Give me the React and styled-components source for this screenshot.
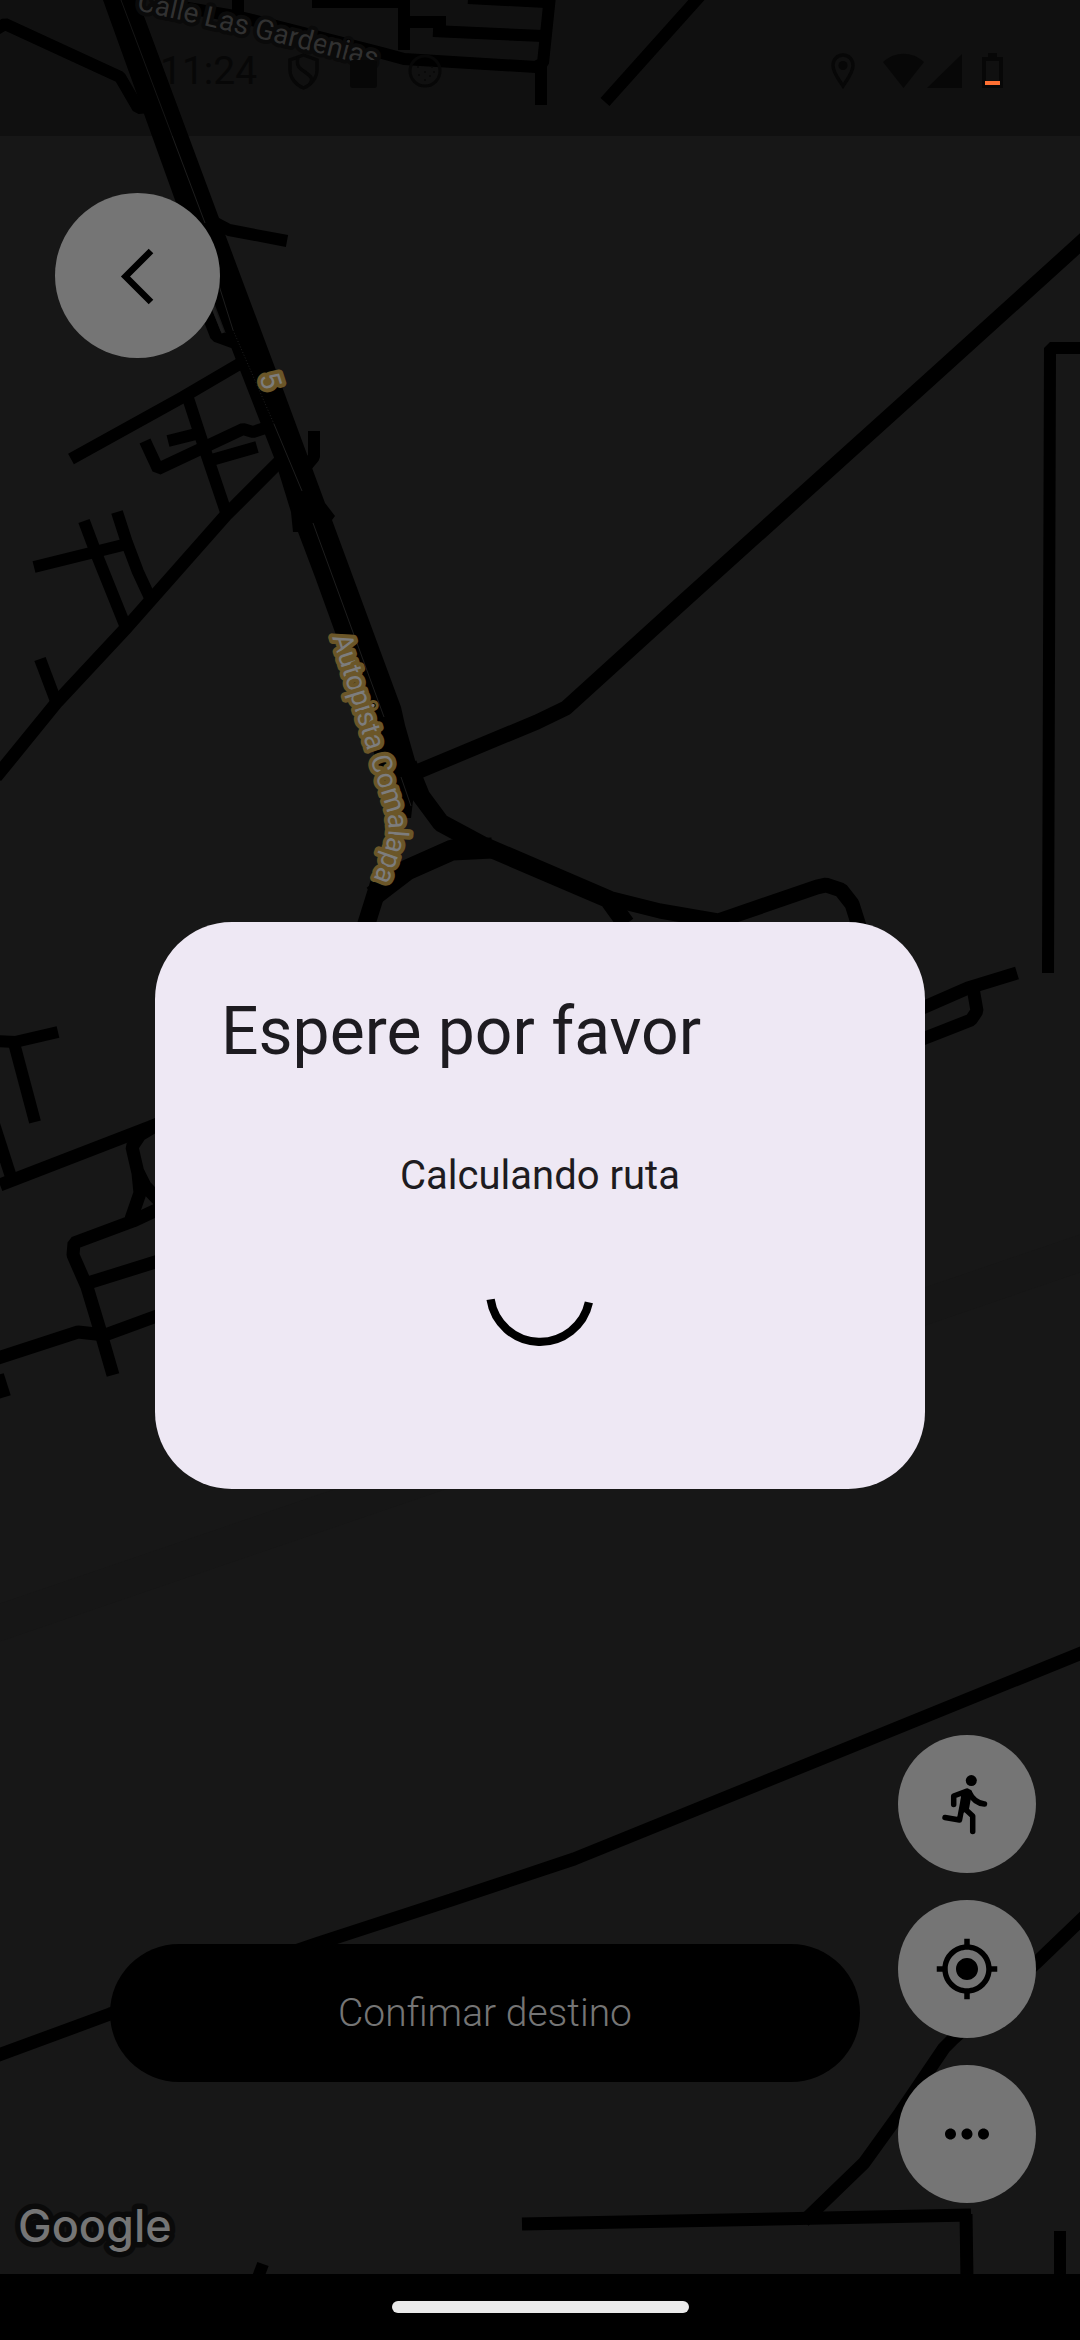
import React from "react";
import styled, { createGlobalStyle } from "styled-components";
import { MdMyLocation, MdMoreHoriz } from "react-icons/md";

const GlobalStyle = createGlobalStyle`
  *, *::before, *::after { box-sizing: border-box; }
  body { margin: 0; background: #171717; font-family: Roboto, "Noto Sans", sans-serif; }
  h2, p { margin: 0; font-weight: 400; }
`;

const Screen = styled.main`
  position: relative;
  min-height: 100vh;
  display: flex;
  flex-direction: column;
  overflow: hidden;
  background: #171717;
`;

const MapLayer = styled.svg`
  position: absolute;
  inset: 0;
  width: 100%;
  height: 100%;
`;

const StatusBar = styled.header`
  position: relative;
  display: flex;
  justify-content: space-between;
  align-items: center;
  height: 136px;
  padding: 6px 77px 0 160px;
  background: rgba(0, 0, 0, 0.27);
  color: #070707;
`;

const StatusGroup = styled.div`
  display: flex;
  align-items: center;
  gap: ${({ $gap }) => $gap}px;
`;

const Clock = styled.time`
  font-size: 39px;
  line-height: 44px;
`;

const Content = styled.section`
  position: relative;
  flex: 1;
  display: flex;
  flex-direction: column;
  justify-content: space-between;
  padding: 57px 44px 71px 55px;
`;

const RoundButton = styled.button`
  display: grid;
  place-items: center;
  width: ${({ $size }) => $size}px;
  height: ${({ $size }) => $size}px;
  padding: 0;
  border: 0;
  border-radius: 50%;
  background: #757575;
  color: #000;
`;

const BottomControls = styled.div`
  display: flex;
  align-items: center;
  gap: 38px;
  padding-left: 55px;
`;

const ConfirmButton = styled.button`
  flex: 1;
  height: 138px;
  margin-top: 88px;
  border: 0;
  border-radius: 69px;
  background: #000;
  color: #757575;
  font-family: inherit;
  font-size: 39px;
  font-weight: 300;
`;

const ActionColumn = styled.div`
  display: flex;
  flex-direction: column;
  gap: 27px;
`;

const NavigationBar = styled.footer`
  position: relative;
  display: grid;
  place-items: center;
  height: 66px;
  background: #000;
`;

const HomeHandle = styled.div`
  width: 297px;
  height: 12px;
  border-radius: 6px;
  background: #eaeaea;
`;

const Overlay = styled.div`
  position: absolute;
  inset: 0;
  display: grid;
  place-items: center;
  padding: 136px 155px 66px;
`;

const Dialog = styled.section`
  width: 100%;
  padding: 66px 66px 142px;
  border-radius: 77px;
  background: #eee8f4;
  color: #1d1b20;
  display: flex;
  flex-direction: column;
`;

const DialogTitle = styled.h2`
  font-size: 66px;
  line-height: 88px;
`;

const DialogBody = styled.div`
  display: flex;
  flex-direction: column;
  align-items: center;
  gap: 33px;
  padding-top: 72px;
`;

const DialogText = styled.p`
  font-size: 40px;
  line-height: 56px;
`;

const minorRoads = [
  "M-5 30L5 24L120 77L138 108L150 107",
  "M212 221L229 230L287 241",
  "M205 308L216 336L238 344",
  "M238 -5V20",
  "M176 6L240 17L382 53L404 59L536 67L543 63L550 -4",
  "M541 64V105",
  "M468 -2L546 2",
  "M312 2H409",
  "M404 0V50",
  "M398 22H446",
  "M433 31L543 36",
  "M700 -4L605 102",
  "M1080 348H1050L1048 973",
  "M71 459L183 397L241 363",
  "M188 398L205 450L226 512",
  "M145 441L158 469L243 429L253 432L265 428",
  "M168 441L200 433",
  "M208 461L257 447",
  "M84 521L96 553L127 630",
  "M117 512L127 543L138 572L151 600",
  "M34 567L127 544",
  "M40 659L57 704",
  "M314 431V457L304 469",
  "M-3 1041L15 1042L58 1032",
  "M14 1043L35 1122",
  "M-6 1124L12 1180",
  "M-2 1375L5 1397",
  "M263 2264L257 2280",
  "M1060 2231V2280",
];

const streets = [
  "M280 461L226 515L127 627L57 702L-4 777",
  "M0 1185L150 1127L170 1119",
  "M165 1120L140 1135L132 1147L138 1173L140 1193L131 1219",
  "M138 1172L145 1186L164 1206",
  "M165 1206L133 1221L74 1243L73 1255L87 1287L100 1330L113 1375",
  "M88 1283L165 1259",
  "M-2 1358L78 1332L105 1335L165 1313",
  "M920 1009L968 988L1017 973",
  "M973 988L977 1011L971 1020L920 1040",
  "M1086 1915L1036 1963L953 2039L944 2048L900 2113L864 2163L804 2221",
  "M522 2224L971 2215",
  "M966 2214L967 2280",
  "M1084 1652L860 1743L574 1859L451 1900L319 1943L110 2014L-4 2056",
];

const Roads = ({ paths, width }) => (
  <g fill="none" stroke="#000" strokeWidth={width} strokeLinejoin="bevel">
    {paths.map((d) => (
      <path key={d} d={d} />
    ))}
  </g>
);

function StreetMap() {
  return (
    <MapLayer viewBox="0 0 1080 2340" preserveAspectRatio="xMidYMid slice" aria-label="Mapa">
      <path d="M-10 1626L1090 1250" stroke="#161616" strokeWidth="36" />
      <Roads paths={minorRoads} width={12} />
      <Roads paths={streets} width={13} />
      <Roads
        width={15}
        paths={[
          "M412 774L537 722L566 708L685 600L929 380L1086 238",
          "M600 896L660 911L718 921L817 887L826 885L841 890L852 904L859 926",
        ]}
      />
      <Roads
        width={18}
        paths={[
          "M408 764L421 796L441 823L482 845L608 899L626 924",
          "M380 880L377 890L366 925",
        ]}
      />
      <Roads width={21} paths={["M492 848L452 850L407 870L373 896"]} />
      <path d="M103 0L175 200L236 360L275 460L291 512L293 532L298 532L315 577L336 635L355 700L380 770L400 818L411 818L417 767L405 725L401 707L332 520L335 516L325 503L277 373L219 218L138 0Z" />
      <g fill="none" stroke="#1d1d1d" strokeWidth="1">
        <path d="M121 0L205 223M216 276L233 330" />
        <path d="M233 330L274 424" strokeDasharray="1 2" />
        <path d="M274 424L302 491M313 523L384 717M401 777L411 806" />
        <path d="M213 308L223 333" strokeWidth="3" />
      </g>

      <g
        fontFamily="Roboto, sans-serif"
        strokeLinejoin="round"
        paintOrder="stroke"
      >
        <path id="gardenias" d="M136 10Q255 36 385 70" fill="none" />
        <text fontSize="28" fill="#444" stroke="#0f0f0f" strokeWidth="8">
          <textPath href="#gardenias">Calle Las Gardenias</textPath>
        </text>
        <path
          id="autopista"
          d="M332 637L368 752L380 790Q391 818 388 837Q384 858 364 900"
          fill="none"
        />
        <g fontSize="28" fill="#7d7d7d" stroke="#6b5628" strokeWidth="8">
          <text>
            <textPath href="#autopista">Autopista Comalapa</textPath>
          </text>
          <text transform="translate(259 376) rotate(72)">5</text>
        </g>
        <text
          x="18"
          y="2242"
          fontFamily="Inter, sans-serif"
          fontSize="45"
          fontWeight="500"
          fill="#757575"
          stroke="#0a0a0a"
          strokeWidth="11"
        >
          Google
        </text>
      </g>
    </MapLayer>
  );
}

const ShieldIcon = () => (
  <svg width="31" height="37" viewBox="0 0 31 37" fill="none" stroke="currentColor" strokeWidth="3.4">
    <path d="M15.5 2L29 7V17C29 25 23 32 15.5 35C8 32 2 25 2 17V7Z" />
    <path d="M10 4C8 13 11 15 17 19C24 24 25 26 22 31" />
  </svg>
);

const CardIcon = () => (
  <svg width="27" height="36" viewBox="0 0 27 36" fill="currentColor">
    <rect y="7" width="27" height="28" rx="3" />
  </svg>
);

const CookieIcon = () => (
  <svg width="34" height="36" viewBox="0 0 34 36" fill="currentColor">
    <circle cx="17" cy="18" r="15" fill="none" stroke="currentColor" strokeWidth="3" />
    {[[10, 14], [24, 14], [17, 19], [11, 22], [22, 23], [17, 27], [26, 19]].map(([x, y]) => (
      <circle key={`${x}-${y}`} cx={x} cy={y} r="1" />
    ))}
  </svg>
);

const PinIcon = () => (
  <svg width="24" height="36" viewBox="0 0 24 36" fill="none" stroke="currentColor" strokeWidth="3.4">
    <path d="M12 2C6 2 2 7 2 12.5C2 20 9 28 12 33C15 28 22 20 22 12.5C22 7 18 2 12 2Z" />
    <circle cx="12" cy="12.5" r="4.5" fill="currentColor" stroke="none" />
  </svg>
);

const WifiIcon = () => (
  <svg width="41" height="36" viewBox="0 0 41 36" fill="currentColor">
    <path d="M0 9C12-2 29-2 41 9L20.5 35Z" />
  </svg>
);

const SignalIcon = () => (
  <svg width="35" height="36" viewBox="0 0 35 36" fill="currentColor">
    <path d="M35 1V35H0Z" />
  </svg>
);

const BatteryIcon = () => (
  <svg width="21" height="36" viewBox="0 0 21 36">
    <path d="M6 0H15V4H6Z" fill="currentColor" />
    <rect x="2" y="6" width="17" height="27" fill="none" stroke="currentColor" strokeWidth="4" />
    <rect x="3" y="28" width="15" height="4" fill="#ff7033" />
  </svg>
);

const BackIcon = () => (
  <svg width="66" height="66" viewBox="0 0 66 66" fill="none" stroke="currentColor" strokeWidth="6.5">
    <path d="M46 8L20.500 33.500L46 59" />
  </svg>
);

const RunIcon = () => (
  <svg width="66" height="66" viewBox="0 0 66 66" fill="none" stroke="currentColor" strokeWidth="5.5" strokeLinecap="round" strokeLinejoin="round">
    <circle cx="37.3" cy="9.6" r="5.5" fill="currentColor" stroke="none" />
    <path d="M33 20L19.7 25V33.5" />
    <path d="M35 21Q40 32 50.5 33" />
    <path d="M29.5 28L25.5 49L11 46.5" />
    <path d="M30 37L38.7 45V60.5" />
    <path d="M29 22L36 21L33 38L28.5 40Z" fill="currentColor" strokeWidth="4" />
  </svg>
);

const Spinner = () => (
  <svg width="110" height="110" viewBox="0 0 110 110" fill="none" stroke="#000" strokeWidth="8.3" role="progressbar" aria-label="Calculando ruta">
    <path d="M5.6 62.4A50 50 0 0 0 103.9 65.4" />
  </svg>
);

export default function App() {
  return (
    <>
      <GlobalStyle />
      <Screen>
        <StreetMap />
        <StatusBar>
          <StatusGroup $gap={31}>
            <Clock>11:24</Clock>
            <ShieldIcon />
            <CardIcon />
            <CookieIcon />
          </StatusGroup>
          <StatusGroup $gap={20}>
            <StatusGroup $gap={28}>
              <PinIcon />
              <StatusGroup $gap={3}>
                <WifiIcon />
                <SignalIcon />
              </StatusGroup>
            </StatusGroup>
            <BatteryIcon />
          </StatusGroup>
        </StatusBar>
        <Content>
          <RoundButton $size={165} aria-label="Atrás">
            <BackIcon />
          </RoundButton>
          <BottomControls>
            <ConfirmButton>Confimar destino</ConfirmButton>
            <ActionColumn>
              <RoundButton $size={138} aria-label="Modo de viaje">
                <RunIcon />
              </RoundButton>
              <RoundButton $size={138} aria-label="Mi ubicación">
                <MdMyLocation size={66} />
              </RoundButton>
              <RoundButton $size={138} aria-label="Más opciones">
                <MdMoreHoriz size={66} />
              </RoundButton>
            </ActionColumn>
          </BottomControls>
        </Content>
        <NavigationBar>
          <HomeHandle />
        </NavigationBar>
        <Overlay>
          <Dialog role="dialog" aria-modal="true" aria-labelledby="dialog-title">
            <DialogTitle id="dialog-title">Espere por favor</DialogTitle>
            <DialogBody>
              <DialogText>Calculando ruta</DialogText>
              <Spinner />
            </DialogBody>
          </Dialog>
        </Overlay>
      </Screen>
    </>
  );
}
